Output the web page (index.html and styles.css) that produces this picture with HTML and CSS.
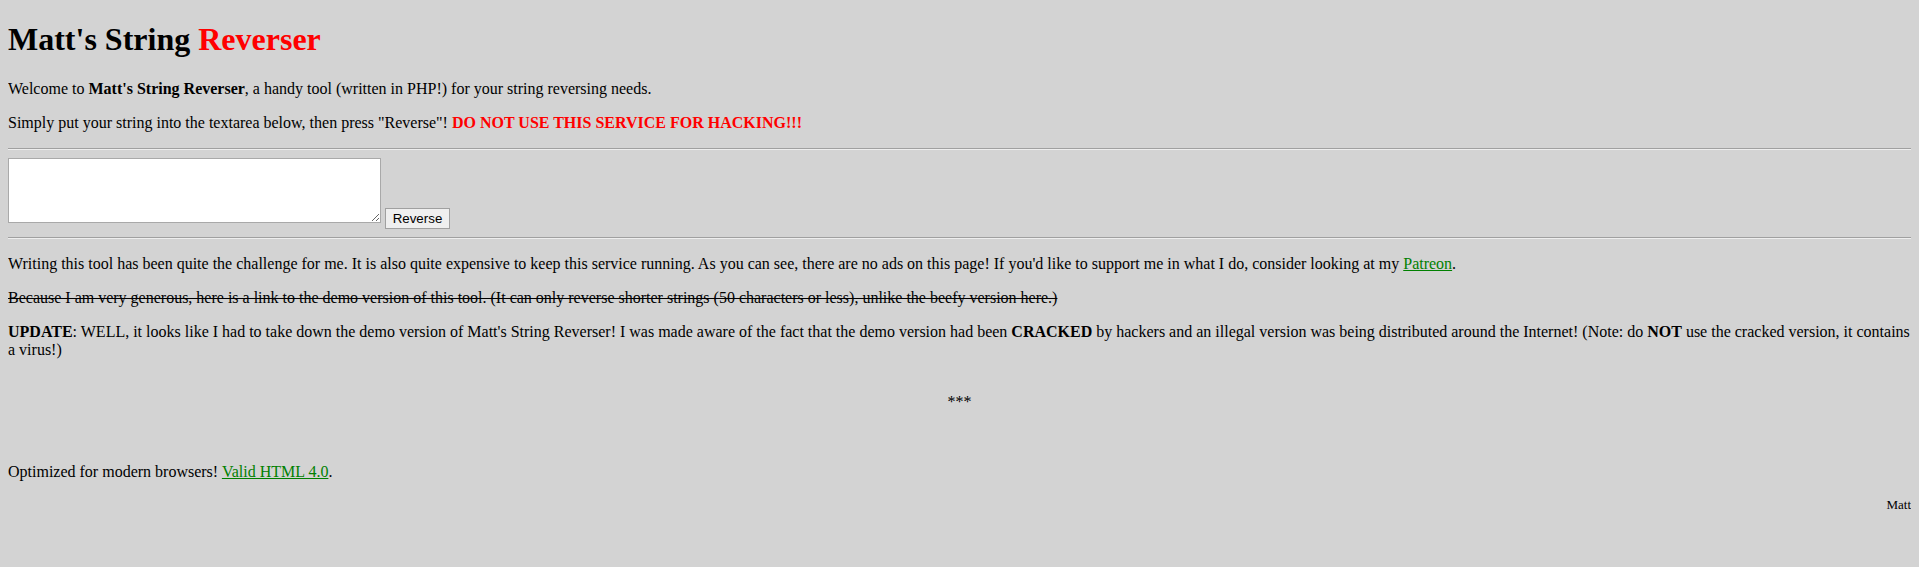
FILE: index.html
```html
<!DOCTYPE html>
<html>
<head>
<meta charset="utf-8">
<title>Matt's String Reverser</title>
<link rel="stylesheet" href="styles.css">
</head>
<body class="page">
<h1 class="title">Matt's String <span class="red">Reverser</span></h1>
<p>Welcome to <b>Matt's String Reverser</b>, a handy tool (written in PHP!) for your string reversing needs.</p>
<p>Simply put your string into the textarea below, then press "Reverse"! <b class="red">DO NOT USE THIS SERVICE FOR HACKING!!!</b></p>
<hr class="rule">
<form class="tool"><textarea class="input" name="s"></textarea> <input class="btn" type="submit" value="Reverse"></form>
<hr class="rule">
<p>Writing this tool has been quite the challenge for me. It is also quite expensive to keep this service running. As you can see, there are no ads on this page! If you'd like to support me in what I do, consider looking at my <a class="link" href="#">Patreon</a>.</p>
<p><s>Because I am very generous, here is a link to the demo version of this tool. (It can only reverse shorter strings (50 characters or less), unlike the beefy version here.)</s></p>
<p><b>UPDATE</b>: WELL, it looks like I had to take down the demo version of Matt's String Reverser! I was made aware of the fact that the demo version had been <b>CRACKED</b> by hackers and an illegal version was being distributed around the Internet! (Note: do <b>NOT</b> use the cracked version, it contains a virus!)</p>
<p class="stars">***</p>
<p class="footer">Optimized for modern browsers! <a class="link" href="#">Valid HTML 4.0</a>.</p>
<p class="sig">Matt</p>
</body>
</html>
```
FILE: styles.css
```css
html { background: #d3d3d3; }
.page {
  margin: 8px;
  background: #d3d3d3;
  color: #000;
  font-family: "Liberation Serif", "Times New Roman", serif;
  font-size: 16px;
}
.title { font-size: 32px; margin: 13px 0 22px; }
.red { color: #ff0000; }
.rule { margin: 8px 0; border: 0; border-top: 1px solid #a0a0a0; border-bottom: 1px solid #eeeeee; height: 0; }
.tool { margin: 0; }
.input {
  width: 373px; height: 65px; box-sizing: border-box;
  border: 1px solid #a9a9a9; background: #fff; margin: 0; vertical-align: baseline;
  font-family: "Liberation Mono", monospace; font-size: 13px;
}
.btn {
  font-family: "Liberation Sans", Arial, sans-serif; font-size: 13.33px;
  width: 65px; height: 21px; padding: 0;
  background: #efefef; border: 1px solid #a0a0a0; color: #000; margin: 0;
}
.link { color: #008000; }
.stars { text-align: center; margin-top: 34px; }
.footer { margin-top: 52px; }
.sig { text-align: right; font-size: 13px; }
```
